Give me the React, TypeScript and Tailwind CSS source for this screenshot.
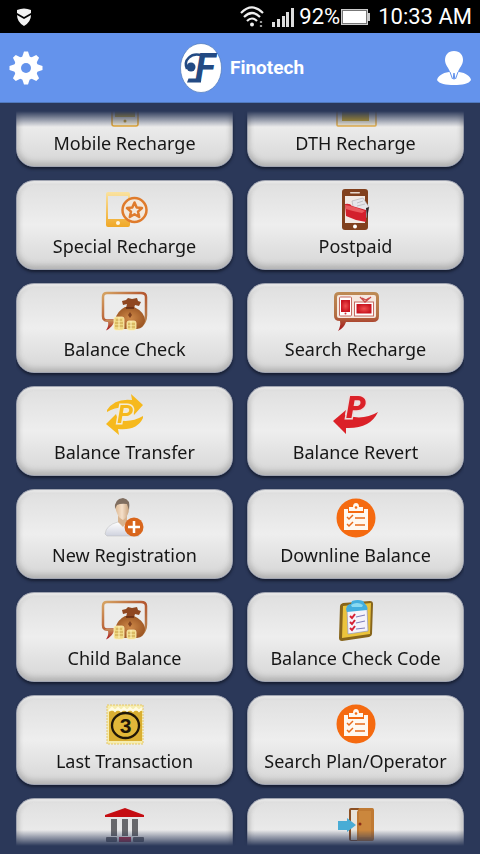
import type { ReactNode } from "react"

const menu = [
  { label: "Mobile Recharge", icon: <MobileIcon /> },
  { label: "DTH Recharge", icon: <TvIcon /> },
  { label: "Special Recharge", icon: <SpecialIcon /> },
  { label: "Postpaid", icon: <PostpaidIcon /> },
  { label: "Balance Check", icon: <MoneyBagIcon /> },
  { label: "Search Recharge", icon: <SearchRechargeIcon /> },
  { label: "Balance Transfer", icon: <TransferIcon /> },
  { label: "Balance Revert", icon: <RevertIcon /> },
  { label: "New Registration", icon: <NewUserIcon /> },
  { label: "Downline Balance", icon: <ChecklistIcon /> },
  { label: "Child Balance", icon: <MoneyBagIcon /> },
  { label: "Balance Check Code", icon: <ClipboardIcon /> },
  { label: "Last Transaction", icon: <LastThreeIcon /> },
  { label: "Search Plan/Operator", icon: <ChecklistIcon /> },
]

// icon-only cards at the end of the list
const iconMenu = [
  { name: "Bank", icon: <BankIcon /> },
  { name: "Exit", icon: <DoorIcon /> },
]

export default function App() {
  return (
    <div className="flex h-screen flex-col overflow-hidden bg-[#2b3859] font-['Roboto',sans-serif]">
      <StatusBar />
      <Header />

      <main className="min-h-0 flex-1 px-4 py-2">
        <div className="h-full overflow-hidden [mask-image:linear-gradient(to_bottom,transparent,black_16px,black_calc(100%-16px),transparent)]">
          {/* list is scrolled a little way down */}
          <nav className="-mt-[34px] grid grid-cols-2 gap-x-3.5 gap-y-[13px]">
            {menu.map((item) => (
              <MenuCard key={item.label} label={item.label} icon={item.icon} />
            ))}
            {iconMenu.map((item) => (
              <MenuCard key={item.name} name={item.name} icon={item.icon} />
            ))}
          </nav>
        </div>
      </main>
    </div>
  )
}

function StatusBar() {
  return (
    <div className="flex h-[33px] shrink-0 items-center justify-between bg-black pl-4 pr-2 text-white">
      <svg className="h-[18px] w-4" viewBox="0 0 16 18" fill="#f2f2f2">
        <path d="M1 2 Q8 -1 15 2 L15 5 L8 9 L1 5 Z" />
        <path d="M1 7 L8 11 L15 7 Q15 14 8 18 Q1 14 1 7 Z" />
      </svg>

      <div className="flex items-center text-[22px] leading-8">
        <svg className="mr-2 h-[22px] w-6" viewBox="0 0 24 22" fill="none" stroke="#eee" strokeWidth="2.200">
          <path d="M1 7 Q12 -4 23 7" />
          <path d="M4 11 Q12 3 20 11" />
          <path d="M7 15 Q12 10 17 15" />
          <circle cx="12" cy="18.500" r="2" fill="#eee" stroke="none" />
          <path d="M21 15 V17 M21 19 V21" stroke="#999" />
        </svg>
        <svg className="mr-1 h-5 w-[23px]" viewBox="0 0 23 20" fill="#ddd">
          <rect x="0" y="15" width="3" height="5" />
          <rect x="5" y="12" width="3" height="8" />
          <rect x="10" y="9" width="3" height="11" />
          <rect x="14" y="5" width="3" height="15" />
          <rect x="19" y="1" width="3" height="19" />
        </svg>
        <span>92%</span>
        <svg className="ml-px mr-2 h-4 w-[29px]" viewBox="0 0 29 16">
          <rect x="0.500" y="0.500" width="26" height="15" fill="#777" stroke="#ccc" />
          <rect x="2" y="2" width="23" height="12" fill="#fff" />
          <rect x="26" y="4" width="3" height="8" fill="#ccc" />
        </svg>
        <span>10:33 AM</span>
      </div>
    </div>
  )
}

function Header() {
  return (
    <header className="flex h-[70px] shrink-0 items-center justify-between border-b border-[#5079bd] bg-[#6493ec] px-[9px]">
      <button aria-label="Settings">
        <svg className="size-[34px]" viewBox="0 0 34 34">
          <g fill="#fff">
            {[0, 45, 90, 135].map((angle) => (
              <path
                key={angle}
                transform={`rotate(${angle} 17 17)`}
                d="M15 0.500 H19 L21.500 8 V26 L19 33.500 H15 L12.500 26 V8 Z"
              />
            ))}
            <circle cx="17" cy="17" r="12" />
          </g>
          <circle cx="17" cy="17" r="5" fill="#6493ec" />
        </svg>
      </button>

      <div className="flex items-center gap-2 pl-1">
        <svg className="h-[50px] w-[42px] shrink-0" viewBox="0 0 42 50">
          <ellipse cx="21" cy="25" rx="20.500" ry="24.500" fill="#fff" stroke="#4e79b7" strokeWidth="0.700" />
          <text
            x="15"
            y="38"
            fill="#234a83"
            fontFamily="Roboto, sans-serif"
            fontSize="38"
            fontWeight="bold"
            fontStyle="italic"
          >
            F
          </text>
          <path d="M22 12.500 C11 9 3 17 7 26" fill="none" stroke="#234a83" strokeWidth="2.500" />
          <path d="M7 39.500 L8.500 35.500 H18 L21 32 V39.500 Z" fill="#234a83" />
          <circle cx="11" cy="24" r="4.500" fill="#234a83" />
        </svg>
        <h1 className="text-[19px] leading-6 font-bold text-white">Finotech</h1>
      </div>

      <button aria-label="Profile">
        <svg className="size-[34px]" viewBox="0 0 34 34" fill="#fff">
          <path d="M17 0 C23 0 26 4 26 9 C26 14 22 17 21 21 H13 C12 17 8 14 8 9 C8 4 11 0 17 0 Z" />
          <path d="M12 21 L22 21 C29 22 33 25 34 29 C32 33 25 34 17 34 C9 34 2 33 0 29 C1 25 5 22 12 21 Z" />
          <path d="M13 21 L15.500 28 M21 21 L18.500 28" stroke="#6493ec" strokeWidth="1" />
          <path d="M16.300 22 H17.700 L18.200 27 L17 29 L15.800 27 Z" fill="#6493ec" />
        </svg>
      </button>
    </header>
  )
}

function MenuCard({ label, name, icon }: { label?: string; name?: string; icon: ReactNode }) {
  return (
    <button
      aria-label={name}
      className="flex h-[90px] flex-col items-center rounded-[18px] border border-[#a0a4b1] bg-linear-to-b from-[#dfdfdf] via-[#eeeeee] to-[#d6d6d6] pt-[7px] shadow-[0_2px_3px_#161d30,inset_0_-3px_6px_#acacac,inset_0_2px_2px_#f1f1f1,inset_1px_0_5px_#d9d9d9,inset_-1px_0_5px_#d9d9d9]"
    >
      {icon}
      {label && (
        <span className="whitespace-nowrap font-['Noto_Sans',sans-serif] text-lg leading-7 text-[#161616]">
          {label}
        </span>
      )}
    </button>
  )
}

function Icon({ children }: { children: ReactNode }) {
  return (
    <svg className="h-11 w-12 shrink-0" viewBox="0 0 48 44" aria-hidden="true">
      {children}
    </svg>
  )
}

function MobileIcon() {
  return (
    <Icon>
      <rect x="11" y="2" width="26" height="39" rx="2" fill="#f3ecd8" stroke="#e6a833" strokeWidth="1.500" />
      <rect x="14" y="7" width="20" height="25" fill="#d9b332" />
      <circle cx="24" cy="36" r="1.500" fill="#b99631" />
    </Icon>
  )
}

function TvIcon() {
  return (
    <Icon>
      <rect x="5" y="10" width="39" height="31" rx="1" fill="#f3ecd8" stroke="#e6b04a" strokeWidth="1.500" />
      <rect x="10" y="14" width="27" height="22" fill="#d3ac25" />
    </Icon>
  )
}

function SpecialIcon() {
  return (
    <Icon>
      <defs>
        <linearGradient id="phone" x1="0" y1="0" x2="0" y2="1">
          <stop offset="0" stopColor="#fae2a0" />
          <stop offset="1" stopColor="#f0a826" />
        </linearGradient>
      </defs>
      <path
        fill="url(#phone)"
        fillRule="evenodd"
        d="M7 4 H27 Q29 4 29 6 V37 Q29 39 27 39 H7 Q5 39 5 37 V6 Q5 4 7 4 Z M7 8 V31 H27 V8 Z"
      />
      <circle cx="17" cy="35" r="2" fill="#fff6df" />
      <circle cx="33.500" cy="22" r="12" fill="#f3e9dd" stroke="#df7b2c" strokeWidth="2.500" />
      <path
        d="M33.500 14.500 L35.700 19.500 L41 20 L37 23.600 L38.200 29 L33.500 26.200 L28.800 29 L30 23.600 L26 20 L31.300 19.500 Z"
        fill="none"
        stroke="#df7b2c"
        strokeWidth="2.500"
        strokeLinejoin="round"
      />
    </Icon>
  )
}

function PostpaidIcon() {
  return (
    <Icon>
      <rect x="10" y="1" width="26" height="41" rx="3" fill="#81401d" />
      <rect x="18" y="4" width="10" height="1.500" rx="0.700" fill="#e8d8cd" />
      <rect x="13" y="8" width="20" height="27" fill="#f1e9e4" />
      <path d="M20 13 L31 10 L37 19 L34 30 L22 24 Z" fill="#e6e6ea" stroke="#a9a9ae" strokeWidth="0.600" />
      <path d="M25 15 L31 13 M25 18 L33 16" stroke="#b7b7bd" strokeWidth="0.800" />
      <path d="M34 20 L37 19 L35 31 Z" fill="#2c2527" />
      <path d="M13 16 Q18 15 20 18 L34 22 L34 34 L24 32 L14 28 Z" fill="#d3202c" />
      <path d="M13 17 Q21 18 33 23 L30 25 Q20 23 14 21 Z" fill="#ea5a5e" />
      <circle cx="23" cy="38.500" r="2" fill="#fff" />
    </Icon>
  )
}

function MoneyBagIcon() {
  return (
    <Icon>
      <defs>
        <linearGradient id="frame" x1="0" y1="0" x2="1" y2="1">
          <stop offset="0" stopColor="#d6a565" />
          <stop offset="0.500" stopColor="#b4562f" />
          <stop offset="1" stopColor="#b98b58" />
        </linearGradient>
        <linearGradient id="tail" x1="0" y1="0" x2="0" y2="1">
          <stop offset="0" stopColor="#c9925a" />
          <stop offset="1" stopColor="#a60f18" />
        </linearGradient>
        <radialGradient id="bag">
          <stop offset="0" stopColor="#cf8a49" />
          <stop offset="1" stopColor="#9f5926" />
        </radialGradient>
      </defs>
      <path d="M13 29.500 H6 Q2 29.500 2 25 V6 Q2 2 6 2 H40 Q45 2 45 6 V24 Q45 31 40 35" fill="#ececec" stroke="url(#frame)" strokeWidth="2.500" />
      <path d="M3 29 H14 Q12 36 5 39.500 Q8 35 7 31 Z" fill="url(#tail)" />
      <path d="M24 16 H33 Q44 21 44 30 Q43 37 36 38 H20 Q13 36 14 29 Q16 20 24 16 Z" fill="url(#bag)" />
      <path d="M21 10 L25 9 L27 7 L31 8 L36 7 L37 10 L40 11 L38 15 L34 14 L33 17 H25 L26 13 L22 14 Z" fill="#8f4721" />
      <path d="M25 17 H33" stroke="#632a13" strokeWidth="1.500" />
      <path d="M29 21 L31 24 L29 27 L27 24 Z" fill="#7d401f" />
      <g fill="#eed783" stroke="#fff0b9" strokeWidth="0.800">
        <rect x="13" y="26" width="10" height="13" rx="2" />
        <rect x="26" y="30" width="9" height="9" rx="2" />
      </g>
      <path d="M15 29 H21 M14 32 H22 M14 35 H22 M27 33 H34 M27 36 H34" stroke="#bc9137" strokeWidth="0.800" />
      <path d="M18 26 V38 M30 30 V38" stroke="#fff3bd" />
    </Icon>
  )
}

function SearchRechargeIcon() {
  return (
    <Icon>
      <defs>
        <linearGradient id="bubble" x1="0" y1="0" x2="0" y2="1">
          <stop offset="0" stopColor="#bd8b55" />
          <stop offset="0.600" stopColor="#b36f44" />
          <stop offset="1" stopColor="#a41018" />
        </linearGradient>
        <radialGradient id="screen">
          <stop offset="0" stopColor="#f05050" />
          <stop offset="1" stopColor="#c91520" />
        </radialGradient>
      </defs>
      <path d="M7 1 H42 Q47 1 47 6 V25 Q47 31 41 31 H14 Q12 37 6 40 Q9 35 8 30 Q2 30 2 25 V6 Q2 1 7 1 Z" fill="url(#bubble)" />
      <rect x="5" y="4" width="39" height="23" rx="2" fill="#f6e8df" />
      <rect x="7.500" y="6" width="12" height="19" rx="1" fill="#fff" stroke="#c66b61" />
      <rect x="9" y="9" width="9" height="12" fill="url(#screen)" />
      <circle cx="13.500" cy="22.500" r="1" fill="#cf3038" />
      <rect x="22.500" y="11" width="19" height="14" fill="#fff" stroke="#c66b61" />
      <rect x="24.500" y="13" width="15" height="9.500" fill="url(#screen)" />
      <path d="M28 6 L33 11 L39 6 M30 7 L34 9 L37 7" fill="none" stroke="#cc4b49" strokeWidth="1.300" />
    </Icon>
  )
}

function TransferIcon() {
  return (
    <Icon>
      <g fill="#f6b91d">
        <path d="M6 16 Q14 4 31 6 L30 0 L42 11 L33 21 L32 15 Q18 11 6 18 Z" />
        <path d="M42 24 Q36 37 17 35 L18 41 L5 30 L15 20 L17 26 Q30 29 42 22 Z" />
      </g>
      <text
        x="24"
        y="29"
        fill="#f6b91d"
        stroke="#f4ecd5"
        strokeWidth="3"
        paintOrder="stroke"
        fontFamily="Roboto, sans-serif"
        fontSize="25"
        fontWeight="bold"
        fontStyle="italic"
        textAnchor="middle"
      >
        P
      </text>
    </Icon>
  )
}

function RevertIcon() {
  return (
    <Icon>
      <path d="M1 27 L14 16 L13 21 Q31 27 46 18 Q38 35 14 34 L14 40 Z" fill="#db2128" />
      <text
        x="24"
        y="24"
        fill="#db2128"
        stroke="#ecdcdc"
        strokeWidth="3"
        paintOrder="stroke"
        fontFamily="Roboto, sans-serif"
        fontSize="31"
        fontWeight="900"
        fontStyle="italic"
        textAnchor="middle"
      >
        P
      </text>
    </Icon>
  )
}

function NewUserIcon() {
  return (
    <Icon>
      <defs>
        <linearGradient id="face" x1="0" y1="0" x2="1" y2="0">
          <stop offset="0" stopColor="#dcb892" />
          <stop offset="0.500" stopColor="#f5dfc9" />
          <stop offset="1" stopColor="#c8a17b" />
        </linearGradient>
        <linearGradient id="shirt" x1="0" y1="0" x2="0" y2="1">
          <stop offset="0" stopColor="#fff" />
          <stop offset="1" stopColor="#cfd2de" />
        </linearGradient>
      </defs>
      <path d="M4 37 Q5 28 17 25 H27 Q37 29 38 39 H6 Z" fill="url(#shirt)" stroke="#bbb" strokeWidth="0.500" />
      <path d="M17 19 H26 V25 L22 30 L17 25 Z" fill="#d8b38e" />
      <path d="M14 9 Q15 3 22 3 Q29 4 28 11 Q28 19 22 23 Q16 21 14 9 Z" fill="url(#face)" />
      <path d="M14 12 Q13 2 22 1 Q30 2 28 13 L26 7 Q20 6 16 8 Z" fill="#806e60" />
      <circle cx="33" cy="30" r="9.500" fill="#d9661c" />
      <path d="M33 24 V36 M27 30 H39" stroke="#fff" strokeWidth="2.500" />
    </Icon>
  )
}

function ChecklistIcon() {
  return (
    <Icon>
      <circle cx="24" cy="21" r="19.500" fill="#f56a10" />
      <path d="M12 12 H16 V16 H32 V12 H36 V33 H12 Z" fill="#fff8ef" />
      <path d="M17 10 H21 Q21 6 24 6 Q27 6 27 10 H31 V14 H17 Z" fill="#fff8ef" />
      <circle cx="24" cy="10.500" r="1.300" fill="#f56a10" />
      <g fill="none" stroke="#e86a1a" strokeWidth="1.500">
        <path d="M15 20 L17 22 L21 18 M23 21 H33" />
        <path d="M15 27 L17 29 L21 25 M23 28 H33" />
      </g>
    </Icon>
  )
}

function ClipboardIcon() {
  return (
    <Icon>
      <path d="M11 3 L38 1 Q41 1 41 4 L40 34 Q40 36 37 37 L10 41 Q7 41 7 38 L8 6 Q8 4 11 3 Z" fill="#87651b" />
      <path d="M11 6 L39 3 L38 34 L10 38 Z" fill="#ebc43c" />
      <path d="M15 9 L35 7 L36 31 L16 34 Z" fill="#f5f3fb" stroke="#8f98bd" strokeWidth="0.700" />
      <path d="M14 9 Q15 4 19 4 L20 1 Q26 -1 31 1 L33 4 Q36 6 35 10 L15 12 Z" fill="#43aede" />
      <path d="M19 5 Q25 1 31 5 L30 7 H20 Z" fill="#8bdaf1" />
      <g fill="none" stroke="#d52034" strokeWidth="2">
        <path d="M18 16 L20 18 L23 14" />
        <path d="M18 22 L20 24 L23 20" />
        <path d="M18 28 L20 30 L23 26" />
      </g>
      <path d="M24 17 L33 15 M24 23 L33 21 M24 29 L33 28" stroke="#8280bb" strokeWidth="1.200" />
    </Icon>
  )
}

function LastThreeIcon() {
  return (
    <Icon>
      <rect x="6" y="2" width="36" height="39" fill="#f6edb0" stroke="#e3bd4b" strokeWidth="0.800" strokeDasharray="2 1" />
      <rect x="8" y="8" width="33" height="30" fill="#d9ae32" />
      <path d="M8 8 L11 5 L14 8 L17 5 L20 8 L23 5 L26 8 L29 5 L32 8 L35 5 L38 8 L41 5" fill="none" stroke="#fffbe4" strokeWidth="2" />
      <ellipse cx="24.500" cy="22.500" rx="13.500" ry="12.500" fill="#e2b839" stroke="#201708" strokeWidth="2.300" />
      <text x="24.500" y="30" fill="#201708" fontFamily="Liberation Sans, sans-serif" fontSize="21" fontWeight="bold" textAnchor="middle">
        3
      </text>
    </Icon>
  )
}

function BankIcon() {
  return (
    <Icon>
      <path d="M24 2 L43 9 V11 H4 V9 Z" fill="#c50d12" />
      <g fill="#68686b">
        <rect x="10" y="13" width="6" height="17" />
        <rect x="21" y="13" width="6" height="17" />
        <rect x="31" y="13" width="6" height="17" />
        <rect x="5" y="31" width="11" height="5" rx="1" />
        <rect x="32" y="31" width="11" height="5" rx="1" />
      </g>
      <rect x="18" y="31" width="12" height="5" fill="#b62e48" />
    </Icon>
  )
}

function DoorIcon() {
  return (
    <Icon>
      <rect x="17" y="2" width="24" height="33" rx="2" fill="#8c5023" />
      <path d="M19 4 H27 V34 H19 Z" fill="#e9e4da" />
      <path d="M25 6 L27 2 H40 Q42 2 42 4 V33 Q42 35 40 35 H25 Z" fill="#c07a33" />
      <path d="M27 5 H39 V31 H27 Z" fill="#cb873d" />
      <circle cx="28" cy="18" r="1.500" fill="#8c2d18" />
      <path d="M6 15 H15 V12 L24 19 L15 26 V24 H6 Z" fill="#49acd5" />
    </Icon>
  )
}
